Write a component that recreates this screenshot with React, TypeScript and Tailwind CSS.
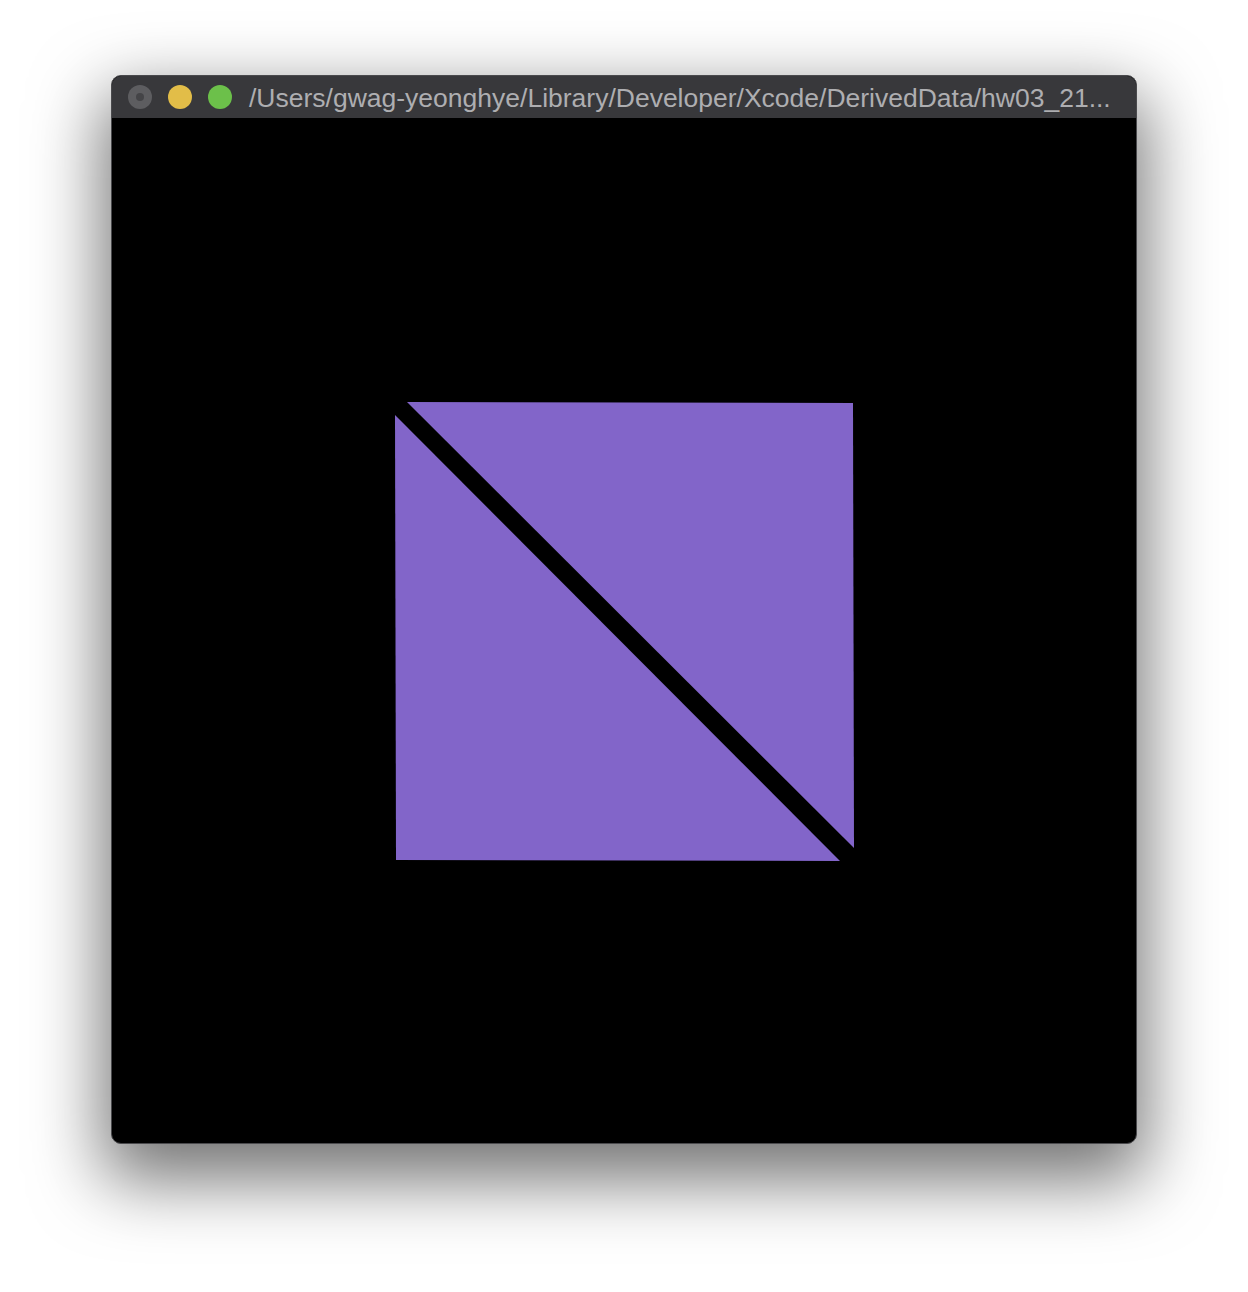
export default function App() {
  return (
    <div className="min-h-[1292px] w-full bg-white pt-[75px]">
      <div className="mx-auto flex h-[1069px] w-[1026px] flex-col overflow-hidden rounded-[10px] border border-[#4a4a4d] bg-black shadow-[0_28px_70px_8px_rgba(0,0,0,0.55)]">
        {/* title bar */}
        <div className="flex h-[42px] shrink-0 items-center bg-[#38383b] px-[16px]">
          <div className="flex items-center gap-[16px]">
            <span className="flex h-[24px] w-[24px] items-center justify-center rounded-full bg-[#5d5d60]">
              <span className="h-[8px] w-[8px] rounded-full bg-[#444447]" />
            </span>
            <span className="h-[24px] w-[24px] rounded-full bg-[#e2bd48]" />
            <span className="h-[24px] w-[24px] rounded-full bg-[#6cc04a]" />
          </div>
          <span className="ml-[17px] mt-[3px] whitespace-nowrap text-[26.5px] leading-none text-[#aeaeb1] font-['Liberation_Sans',sans-serif]">
            /Users/gwag-yeonghye/Library/Developer/Xcode/DerivedData/hw03_21...
          </span>
        </div>
        {/* GL view */}
        <div className="flex-1">
          <svg width="1024" height="1026" viewBox="0 0 1024 1026" className="block">
            <polygon points="295,284 741,285 742,730" fill="#8265c9" />
            <polygon points="283,297 284,742 728,743" fill="#8265c9" />
          </svg>
        </div>
      </div>
    </div>
  );
}
